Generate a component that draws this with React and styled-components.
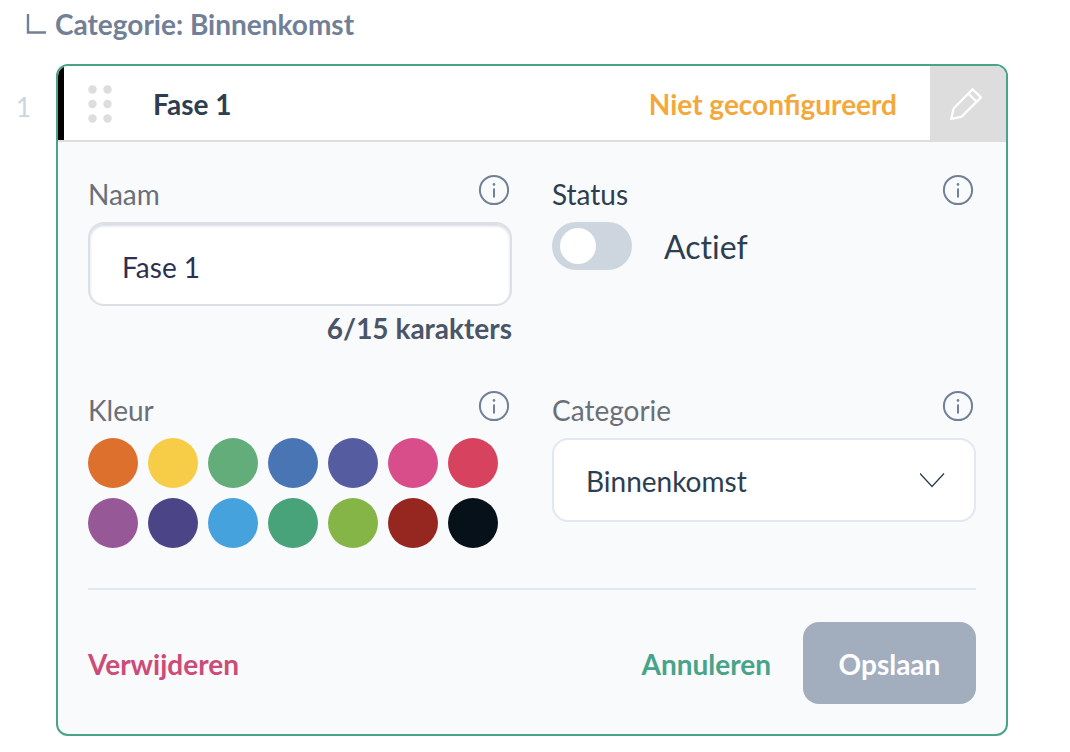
import { useState } from 'react'
import styled, { createGlobalStyle } from 'styled-components'

const GlobalStyle = createGlobalStyle`
* {
  box-sizing: border-box;
}
body {
  margin: 0;
  background-color: white;
  color: #2c3e50;
  font-family: Lato, "Liberation Sans", sans-serif;
  font-size: 28px;
}
button, input, select {
  font: inherit;
  color: inherit;
}
`

const Page = styled.main`
padding: 0 62px 16px 0;
`
const Heading = styled.h2`
display: flex;
align-items: center;
gap: 9px;
height: 48px;
margin: 0 0 16px;
padding-left: 26px;
font-size: 28px;
font-weight: 700;
color: #718096;
`
const Row = styled.div`
display: flex;
align-items: flex-start;
`
const RowNumber = styled.span`
flex: 0 0 56px;
padding-left: 16px;
line-height: 86px;
font-size: 26px;
color: #cbd5e0;
`
const Card = styled.section`
flex: 1;
min-width: 0;
overflow: hidden;
border: 2px solid #48a389;
border-radius: 12px;
background-color: #f9fafc;
`
const CardHeader = styled.header`
display: flex;
align-items: stretch;
height: 76px;
background-color: white;
box-shadow: inset 0 -2px #dddddd;
line-height: 76px;
`
const ColorBar = styled.div`
width: 6px;
margin-bottom: 2px;
background-color: ${props => props.$color};
`
const DragHandle = styled.button`
display: flex;
align-items: center;
padding: 0 0 0 24px;
border: 0;
background: none;
cursor: grab;
`
const CardTitle = styled.h3`
flex: 1;
margin: 0 0 0 40px;
font-size: 28px;
font-weight: 700;
`
const Warning = styled.span`
padding-right: 33px;
font-weight: 700;
color: #f3a83c;
`
const EditButton = styled.button`
display: flex;
align-items: center;
justify-content: center;
width: 76px;
padding: 0;
border: 0;
background-color: #dddddd;
cursor: pointer;
`
const Form = styled.form`
padding: 30px;
`
const Fields = styled.div`
display: grid;
grid-template-columns: 1fr 1fr;
gap: 38px 40px;
`
const Field = styled.div`
min-width: 0;
`
const FieldHead = styled.div`
display: flex;
align-items: flex-start;
justify-content: space-between;
height: 50px;
`
const Label = styled.label`
line-height: 44px;
color: ${props => (props.$dark ? '#2c3e50' : '#6a6f78')};
`
const InfoButton = styled.button`
display: flex;
padding: 0;
border: 0;
background: none;
cursor: pointer;
`
const TextInput = styled.input`
display: block;
width: 100%;
height: 84px;
padding: 6px 32px 0;
border: 2px solid #dcdfe6;
border-radius: 16px;
background-color: white;
box-shadow: inset 0 2px 3px #d5d9e0;
color: #2d3050;
outline: none;
`
const Counter = styled.p`
margin: 0;
line-height: 44px;
text-align: right;
font-weight: 700;
color: #4a5568;
`
const SwitchLine = styled.label`
display: flex;
align-items: center;
gap: 32px;
height: 48px;
font-size: 32px;
font-variant-ligatures: none;
`
const Switch = styled.input`
appearance: none;
display: flex;
align-items: center;
width: 80px;
height: 48px;
margin: 0;
padding: 0 8px;
border-radius: 24px;
background-color: ${props => (props.checked ? '#48a389' : '#cdd5df')};
cursor: pointer;

&::before {
  content: "";
  width: 36px;
  height: 36px;
  margin-left: ${props => (props.checked ? 'auto' : '0')};
  border-radius: 50%;
  background-color: white;
}
`
const Swatches = styled.div`
display: flex;
flex-wrap: wrap;
gap: 10px;
`
const Swatch = styled.input`
appearance: none;
width: 50px;
height: 50px;
margin: 0;
border-radius: 50%;
background-color: ${props => props.$color};
cursor: pointer;
`
const SelectBox = styled.div`
display: grid;
align-items: center;

> * {
  grid-area: 1 / 1;
}
> svg {
  justify-self: end;
  margin-right: 30px;
  pointer-events: none;
}
`
const Select = styled.select`
appearance: none;
width: 100%;
height: 84px;
padding: 2px 72px 0 32px;
border: 2px solid #e2e8f0;
border-radius: 16px;
background-color: white;
outline: none;
`
const Footer = styled.footer`
display: flex;
align-items: center;
gap: 32px;
margin-top: 40px;
padding-top: 32px;
border-top: 2px solid #e2e8f0;
`
const TextButton = styled.button`
padding: 2px 0 0;
border: 0;
background: none;
font-weight: 700;
color: ${props => props.$color};
cursor: pointer;
`
const DeleteButton = styled(TextButton)`
margin-right: auto;
`
const SaveButton = styled(TextButton)`
min-width: 173px;
height: 82px;
padding: 2px 32px 0;
border-radius: 16px;
background-color: #a2adbd;
`

const colors = [
  ['Oranje', '#dd702d'],
  ['Geel', '#f7cd48'],
  ['Groen', '#62ad79'],
  ['Blauw', '#4a75b5'],
  ['Indigo', '#555c9f'],
  ['Roze', '#d84e8b'],
  ['Rood', '#d7425e'],
  ['Paars', '#965896'],
  ['Donkerpaars', '#4b4487'],
  ['Lichtblauw', '#46a2dc'],
  ['Zeegroen', '#48a37b'],
  ['Limoen', '#85b546'],
  ['Donkerrood', '#952720'],
  ['Zwart', '#07111a'],
]

function CornerIcon() {
  return (
    <svg width="20" height="20" fill="none" stroke="#718096" strokeWidth="2.4" aria-hidden="true">
      <path d="M2 0V18.5H20" />
    </svg>
  )
}

function DotsIcon() {
  return (
    <svg width="25" height="38" fill="#dddddd" aria-hidden="true">
      {[4.5, 19, 33.5].map(y => (
        <g key={y}>
          <circle cx="4.5" cy={y} r="4.2" />
          <circle cx="19.5" cy={y} r="4.2" />
        </g>
      ))}
    </svg>
  )
}

function PencilIcon() {
  return (
    <svg width="36" height="36" fill="none" stroke="white" strokeWidth="2.2" strokeLinejoin="round" aria-hidden="true">
      <path d="M22.6 3.2 31 11.4 11.6 30.6 1.2 33 3.6 22.6Z" />
      <path d="M18.4 7.6 26.6 15.8" />
    </svg>
  )
}

function Info({ about }) {
  return (
    <InfoButton type="button" aria-label={`Uitleg over ${about}`}>
      <svg width="36" height="36" fill="none" stroke="#718096" aria-hidden="true">
        <circle cx="18" cy="18" r="14.1" strokeWidth="2" />
        <path d="M18 16.4V25.4" strokeWidth="2" />
        <circle cx="18" cy="12.4" r="1.3" fill="#718096" stroke="none" />
      </svg>
    </InfoButton>
  )
}

function App() {
  const [name, setName] = useState('Fase 1')
  const [active, setActive] = useState(false)
  const [color, setColor] = useState('#000000')

  return (
    <>
      <GlobalStyle />
      <Page>
        <Heading><CornerIcon />Categorie: Binnenkomst</Heading>
        <Row>
          <RowNumber>1</RowNumber>
          <Card>
            <CardHeader>
              <ColorBar $color={color} />
              <DragHandle type="button" aria-label="Verplaatsen"><DotsIcon /></DragHandle>
              <CardTitle>{name}</CardTitle>
              <Warning>Niet geconfigureerd</Warning>
              <EditButton type="button" aria-label="Bewerken"><PencilIcon /></EditButton>
            </CardHeader>
            <Form onSubmit={e => e.preventDefault()}>
              <Fields>
                <Field>
                  <FieldHead>
                    <Label htmlFor="naam">Naam</Label>
                    <Info about="naam" />
                  </FieldHead>
                  <TextInput id="naam" maxLength={15} value={name} onChange={e => setName(e.target.value)} />
                  <Counter>{name.length}/15 karakters</Counter>
                </Field>
                <Field>
                  <FieldHead>
                    <Label as="span" $dark>Status</Label>
                    <Info about="status" />
                  </FieldHead>
                  <SwitchLine>
                    <Switch type="checkbox" role="switch" checked={active} onChange={e => setActive(e.target.checked)} />
                    Actief
                  </SwitchLine>
                </Field>
                <Field>
                  <FieldHead>
                    <Label as="span" id="kleur">Kleur</Label>
                    <Info about="kleur" />
                  </FieldHead>
                  <Swatches role="radiogroup" aria-labelledby="kleur">
                    {colors.map(([label, value]) => (
                      <Swatch
                        key={value}
                        type="radio"
                        name="kleur"
                        aria-label={label}
                        $color={value}
                        checked={color === value}
                        onChange={() => setColor(value)}
                      />
                    ))}
                  </Swatches>
                </Field>
                <Field>
                  <FieldHead>
                    <Label htmlFor="categorie">Categorie</Label>
                    <Info about="categorie" />
                  </FieldHead>
                  <SelectBox>
                    <Select id="categorie">
                      <option>Binnenkomst</option>
                    </Select>
                    <svg width="26" height="16" fill="none" stroke="#2c3e50" strokeWidth="1.3" aria-hidden="true">
                      <path d="M0 1.5 12 14.5 24 1.5" />
                    </svg>
                  </SelectBox>
                </Field>
              </Fields>
              <Footer>
                <DeleteButton type="button" $color="#cd4c77">Verwijderen</DeleteButton>
                <TextButton type="button" $color="#48a389">Annuleren</TextButton>
                <SaveButton type="submit" $color="white">Opslaan</SaveButton>
              </Footer>
            </Form>
          </Card>
        </Row>
      </Page>
    </>
  )
}

export default App
